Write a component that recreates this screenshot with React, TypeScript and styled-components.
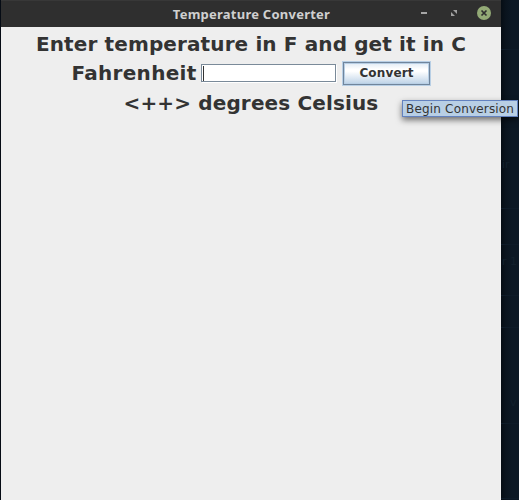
import React from 'react';
import styled, { createGlobalStyle } from 'styled-components';

const GlobalStyle = createGlobalStyle`
  * { box-sizing: border-box; }
  body { margin: 0; overflow: hidden; background: #0c1824; }
`;

const Desktop = styled.div`
  position: relative;
  display: flex;
  width: 519px;
  height: 500px;
  padding-left: 1px;
  overflow: hidden;
  background: linear-gradient(90deg, #050b14 0 501px, #060d14 501px, #0a141e 506px, #0c1824 512px);
  font-family: "DejaVu Sans", sans-serif;
  color: #333;
`;

const Window = styled.main`
  flex: none;
  display: flex;
  flex-direction: column;
  width: 500px;
  height: 500px;
  background: #eeeeee;
`;

const Backdrop = styled.aside`
  flex: 1;
  min-width: 0;
  display: flex;
  flex-direction: column;
  overflow: hidden;
  color: #12202c;
`;

const Strip = styled.div<{ $height: number; $top?: number; $left?: number }>`
  flex: none;
  height: ${p => p.$height}px;
  padding: ${p => p.$top ?? 0}px 0 0 ${p => p.$left ?? 0}px;
  font-size: 11px;
  line-height: 14px;
  white-space: nowrap;
  border-bottom: 1px solid #0e1b28;
`;

const TitleBar = styled.header`
  flex: none;
  display: grid;
  grid-template-columns: 80px 1fr 80px;
  height: 27px;
  background: #2f2f2f;
  border-top: 1px solid #383838;
`;

const Title = styled.h1`
  grid-column: 2;
  margin: 0;
  padding: 3px 0 0 1px;
  text-align: center;
  font: bold 13px/20px "Noto Sans", sans-serif;
  letter-spacing: 0.24px;
  color: #d0d0d0;
`;

const Controls = styled.div`
  display: flex;
  height: 26px;
`;

const Content = styled.section`
  display: flex;
  flex-direction: column;
  align-items: center;
  padding-top: 5px;
`;

const Line = styled.div<{ $height: number; $gap: number }>`
  display: flex;
  align-items: flex-start;
  height: ${p => p.$height}px;
  margin-bottom: ${p => p.$gap}px;
`;

const Label = styled.span<{ $spacing: number }>`
  font-weight: bold;
  font-size: 20px;
  line-height: 24px;
  letter-spacing: ${p => p.$spacing}px;
  white-space: pre;
`;

const Field = styled.div`
  display: flex;
  width: 135px;
  height: 18px;
  margin: 3px 6px 0 4px;
  padding: 1px;
  background: #fff;
  border: 1px solid #7a8a99;
  box-shadow: 1px 1px #fff;
`;

const Caret = styled.i`
  width: 1px;
  height: 15px;
  background: #333;
`;

const Button = styled.button`
  width: 89px;
  height: 25px;
  padding: 0 0 1px 1px;
  border: 1px solid #b8cfe5;
  outline: 0;
  background: linear-gradient(#dde8f3, #ffffff 32%, #ffffff 40%, #b8cfe5);
  box-shadow: inset 0 0 0 1px #70859c, inset 0 0 0 2px #b8cfe5;
  color: #333;
  font: bold 12px/20px "DejaVu Sans", sans-serif;
  letter-spacing: 0.15px;
`;

const Tooltip = styled.div`
  position: absolute;
  left: 402px;
  top: 100px;
  width: 116px;
  height: 17px;
  padding-left: 3px;
  border: 1px solid #6382bf;
  background: #b8cfe5;
  box-shadow: 0 3px 6px rgba(0, 0, 0, 0.55);
  font-size: 12px;
  line-height: 16px;
  letter-spacing: 0.18px;
  white-space: nowrap;
`;

export default function App() {
  return (
    <>
      <GlobalStyle />
      <Desktop>
        <Window>
          <TitleBar>
            <Title>Temperature Converter</Title>
            <Controls>
              <svg width="80" height="26" viewBox="421 1 80 26">
                <path d="M421 13h6" stroke="#a6a6a6" strokeWidth="2" />
                <path d="M453 10h4v4zM451 12v4h4z" fill="#a0a0a0" />
                <circle cx="484" cy="13" r="7" fill="#93aa76" />
                <path d="M481.5 10.5l5 5M486.5 10.5l-5 5" stroke="#2f2f2f" strokeWidth="1.7" />
              </svg>
            </Controls>
          </TitleBar>
          <Content>
            <Line $height={24} $gap={5}>
              <Label $spacing={0.12}>Enter temperature in F and get it in C</Label>
            </Line>
            <Line $height={25} $gap={5}>
              <Label $spacing={0.3}>Fahrenheit</Label>
              <Field><Caret /></Field>
              <Button>Convert</Button>
            </Line>
            <Line $height={24} $gap={5}>
              <Label $spacing={0.14}>&lt;++&gt; degrees Celsius</Label>
            </Line>
          </Content>
        </Window>
        <Backdrop>
          <Strip $height={50} />
          <Strip $height={159} $top={108} $left={1}>ir</Strip>
          <Strip $height={36} />
          <Strip $height={51} $top={10} $left={1}>r 1</Strip>
          <Strip $height={32} />
          <Strip $height={96} $top={68} $left={9}>v</Strip>
          <Strip $height={75} />
        </Backdrop>
        <Tooltip>Begin Conversion</Tooltip>
      </Desktop>
    </>
  );
}
